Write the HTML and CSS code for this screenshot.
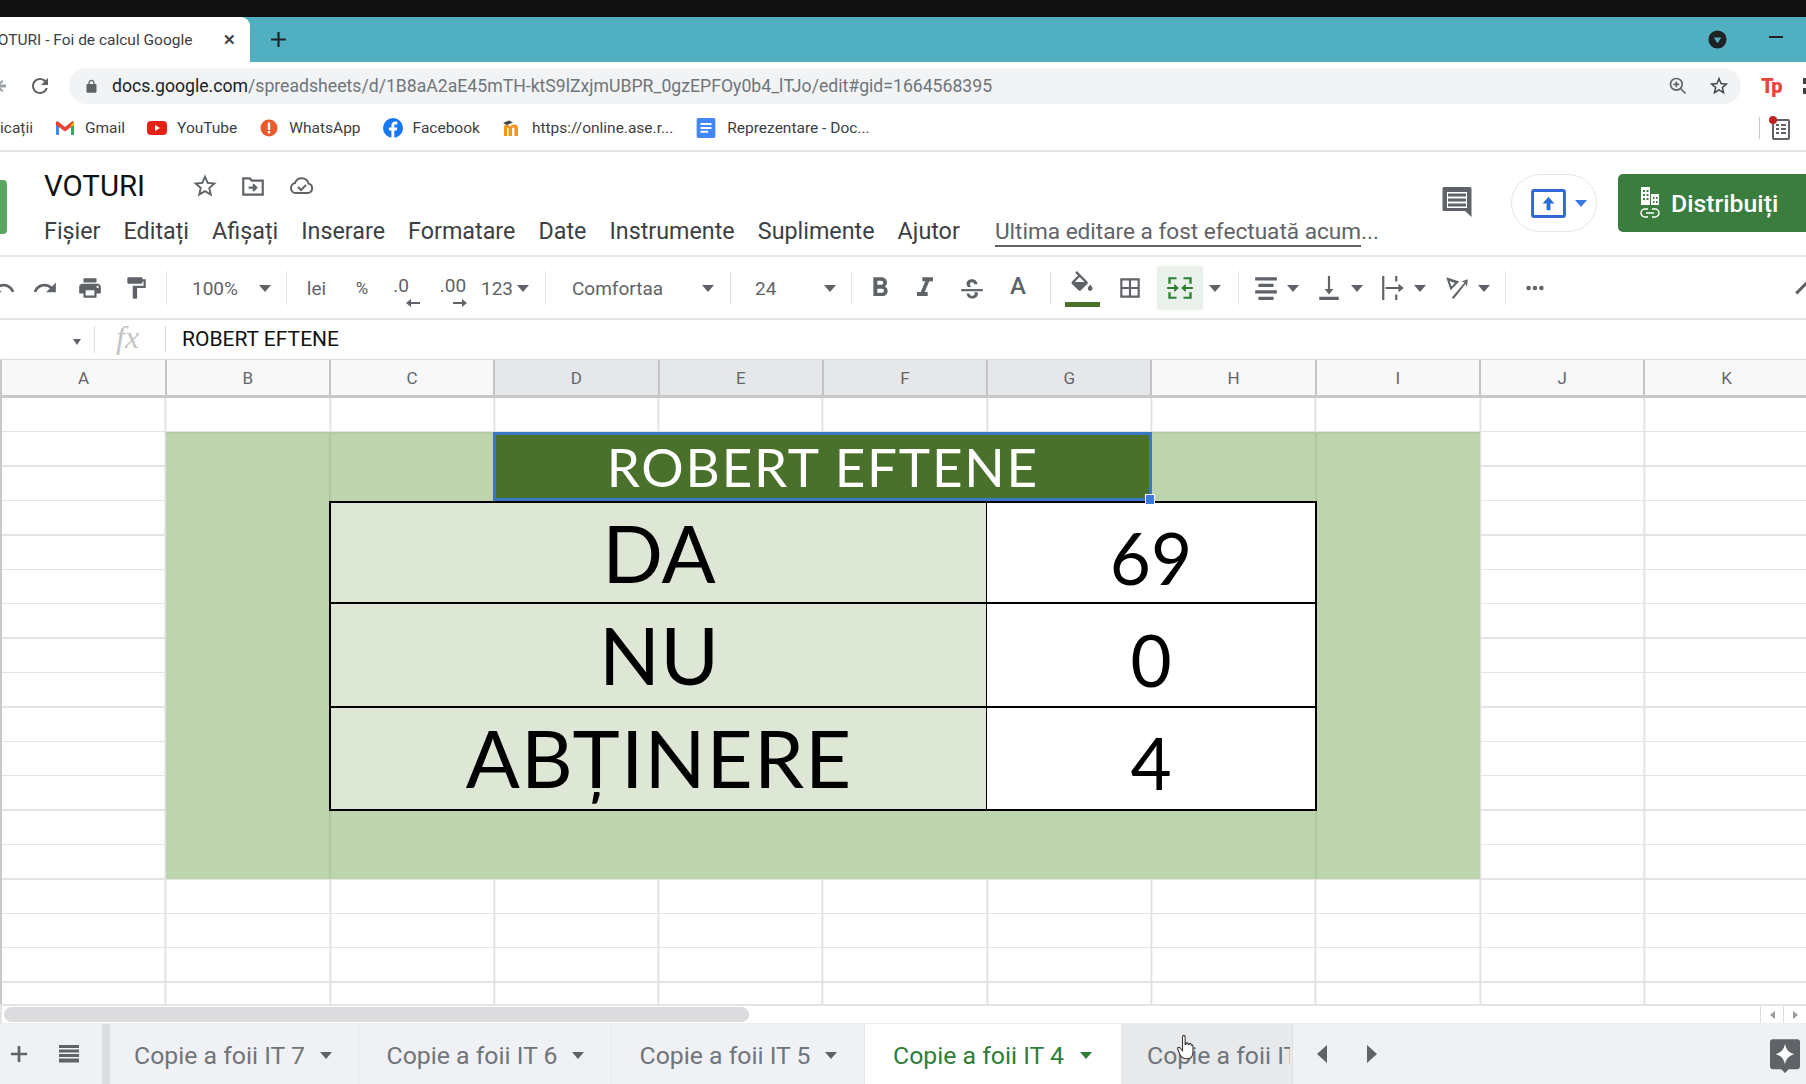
FILE: index.html
```html
<!DOCTYPE html>
<html lang="ro">
<head>
<meta charset="utf-8">
<title>VOTURI - Foi de calcul Google</title>
<link rel="stylesheet" href="styles.css">
</head>
<body>
<div class="blackbar"></div>
<div class="tabstrip">
  <div class="ctab"><span class="ctab-title">VOTURI - Foi de calcul Google</span><span class="ctab-x">✕</span></div>
  <svg class="newtab" viewBox="0 0 16 16"><path d="M7 1h2v6h6v2H9v6H7V9H1V7h6z"/></svg>
  <div class="grow"></div>
  <svg class="profile" viewBox="0 0 20 20"><circle cx="10" cy="10" r="9.500" fill="#202124"/><path d="M6 8h8l-4 6z" fill="#50b0c1"/></svg>
  <div class="minimize"></div>
</div>
<div class="addressrow">
  <svg class="backfrag" viewBox="0 0 8 20"><path d="M-4 10l6-6 1.500 1.500L0 8.500h6v3H0l3.500 3L2 16z" fill="#9aa0a6"/></svg>
  <svg class="reload" viewBox="0 0 24 24"><path d="M17.650 6.350C16.200 4.900 14.210 4 12 4c-4.420 0-7.990 3.580-7.990 8s3.570 8 7.990 8c3.730 0 6.840-2.550 7.730-6h-2.080c-.82 2.330-3.040 4-5.650 4-3.310 0-6-2.690-6-6s2.690-6 6-6c1.660 0 3.140.69 4.220 1.780L13 11h7V4l-2.350 2.350z"/></svg>
  <div class="omnibox">
    <svg class="lock" viewBox="0 0 24 24"><path d="M18 8h-1V6c0-2.760-2.240-5-5-5S7 3.240 7 6v2H6c-1.100 0-2 .9-2 2v10c0 1.100.9 2 2 2h12c1.100 0 2-.9 2-2V10c0-1.100-.9-2-2-2zM9 6c0-1.660 1.340-3 3-3s3 1.340 3 3v2H9V6z"/></svg>
    <span class="url"><span class="url-host">docs.google.com</span>/spreadsheets/d/1B8aA2aE45mTH-ktS9lZxjmUBPR_0gzEPFOy0b4_lTJo/edit#gid=1664568395</span>
    <div class="grow"></div>
    <svg class="omni-ic" viewBox="0 0 24 24"><circle cx="10" cy="10" r="7" fill="none" stroke="#5f6368" stroke-width="2"/><path d="M15 15l6 6M10 6.500v7M6.500 10h7" fill="none" stroke="#5f6368" stroke-width="2"/></svg>
    <svg class="omni-ic omni-star" viewBox="0 0 24 24"><path fill="#3c4043" d="M22 9.240l-7.190-.62L12 2 9.190 8.630 2 9.240l5.460 4.730L5.820 21 12 17.270 18.180 21l-1.630-7.030L22 9.240zM12 15.400l-3.760 2.270 1-4.280-3.320-2.880 4.380-.38L12 6.100l1.710 4.040 4.380.38-3.320 2.880 1 4.280L12 15.400z"/></svg>
  </div>
  <span class="tp"><span class="tp-t">T</span><span class="tp-p">p</span></span>
  <div class="vdots"><i></i><i></i></div>
</div>
<div class="bookmarks">
  <span class="bm-text bm-first">icații</span>
  <svg class="bm-ic" viewBox="0 0 20 20"><path d="M1 4h3v13H2a1 1 0 0 1-1-1z" fill="#4285f4"/><path d="M16 4h3v12a1 1 0 0 1-1 1h-2z" fill="#34a853"/><path d="M1 4l1.500-1L10 9l7.500-6L19 4v3l-9 6.500L1 7z" fill="#ea4335"/><path d="M16 6.500l3-2.500v3l-3 2.300z" fill="#fbbc04"/></svg>
  <span class="bm-text">Gmail</span>
  <svg class="bm-ic" viewBox="0 0 20 20"><rect y="3" width="20" height="14" rx="4" fill="#e62117"/><path d="M8 7l5 3-5 3z" fill="#fff"/></svg>
  <span class="bm-text">YouTube</span>
  <svg class="bm-ic" viewBox="0 0 20 20"><circle cx="10" cy="10" r="8.500" fill="#ea5a2b"/><rect x="8.800" y="4.500" width="2.400" height="7.500" fill="#fff"/><rect x="8.800" y="13" width="2.400" height="2.400" fill="#fff"/></svg>
  <span class="bm-text">WhatsApp</span>
  <svg class="bm-ic" viewBox="0 0 20 20"><circle cx="10" cy="10" r="10" fill="#1877f2"/><path d="M11.300 20v-7.500h2.500l.4-3h-2.900V7.800c0-.9.3-1.400 1.500-1.400h1.500V3.700c-.3 0-1.200-.1-2.200-.1-2.200 0-3.700 1.300-3.700 3.800v2.100H5.900v3h2.500V20z" fill="#fff"/></svg>
  <span class="bm-text">Facebook</span>
  <svg class="bm-ic" viewBox="0 0 20 20"><path d="M2 18V9c0-1.500 1-2.500 2.500-2.500S7 7.500 8 8.500C9 7.500 10 6.500 12 6.500c3 0 4 2 4 4V18h-3.500v-7c0-1-.5-1.500-1-1.500S10 10 10 11v7H6.500v-7c0-1-.5-1.500-1-1.500S5 10 5 11v7z" fill="#f39322"/><path d="M1 5l6-2.500 4 2-6 2.500z" fill="#444"/></svg>
  <span class="bm-text">https://online.ase.r...</span>
  <svg class="bm-ic bm-doc" viewBox="0 0 20 20"><path d="M3 1h14a1.500 1.500 0 0 1 1.500 1.500v15A1.500 1.500 0 0 1 17 19H3a1.500 1.500 0 0 1-1.500-1.500v-15A1.500 1.500 0 0 1 3 1z" fill="#4285f4"/><path d="M5 5.500h10v1.800H5zM5 9h10v1.800H5zM5 12.500h7v1.800H5z" fill="#fff"/></svg>
  <span class="bm-text">Reprezentare - Doc...</span>
  <div class="grow"></div>
  <div class="bm-sep"></div>
  <svg class="bm-list" viewBox="0 0 22 24"><rect x="4" y="4" width="16" height="19" rx="1" fill="#fff" stroke="#5f6368" stroke-width="2"/><path d="M7 9h3M12 9h5M7 13h3M12 13h5M7 17h3M12 17h5" stroke="#5f6368" stroke-width="2"/><circle cx="4" cy="4" r="4" fill="#c5221f"/></svg>
  <span class="bm-text bm-last">L</span>
</div>
<header class="docheader">
  <div class="logo"></div>
  <div class="docinfo">
    <div class="titlerow">
      <span class="doctitle">VOTURI</span>
      <svg class="ti-star" viewBox="0 0 24 24"><path d="M22 9.240l-7.190-.62L12 2 9.190 8.630 2 9.240l5.460 4.730L5.820 21 12 17.270 18.180 21l-1.630-7.030L22 9.240zM12 15.400l-3.760 2.270 1-4.280-3.320-2.880 4.380-.38L12 6.100l1.710 4.040 4.380.38-3.320 2.880 1 4.280L12 15.400z"/></svg>
      <svg class="ti-folder" viewBox="0 0 24 24"><path d="M3 5h6l2 2h10v13H3z" fill="none" stroke="#5f6368" stroke-width="2"/><path d="M8 13.500h6M12 10.500l3 3-3 3" fill="none" stroke="#5f6368" stroke-width="2"/></svg>
      <svg class="ti-cloud" viewBox="0 0 28 24"><path d="M8 19a5 5 0 0 1-1-9.900 7 7 0 0 1 13.500 0.500A4.800 4.800 0 0 1 20 19z" fill="none" stroke="#5f6368" stroke-width="2"/><path d="M10 13l3 3 5-5" fill="none" stroke="#5f6368" stroke-width="2"/></svg>
    </div>
    <nav class="menu">
      <span>Fișier</span><span>Editați</span><span>Afișați</span><span>Inserare</span><span>Formatare</span><span>Date</span><span>Instrumente</span><span>Suplimente</span><span>Ajutor</span>
      <span class="lastedit"><span class="lastedit-u">Ultima editare a fost efectuată acum</span>...</span>
    </nav>
  </div>
  <div class="grow"></div>
  <svg class="comment" viewBox="0 0 32 32"><path d="M3 1h26a1.500 1.500 0 0 1 1.500 1.500V31L24 25H3a1.500 1.500 0 0 1-1.500-1.500v-21A1.500 1.500 0 0 1 3 1z" fill="#5f6368"/><path d="M6 6h20v16H6z" fill="#fff"/><path d="M7 7.500h18v3H7zM7 12.500h18v3H7zM7 17.500h18v3H7z" fill="#5f6368"/></svg>
  <div class="present">
    <svg class="present-ic" viewBox="0 0 36 30"><rect x="1.500" y="1.500" width="33" height="27" rx="1.500" fill="#fff" stroke="#3367d6" stroke-width="3"/><path d="M18 8l6 7h-4v7h-4v-7h-4z" fill="#2a6fd6"/></svg>
    <svg class="present-arrow" viewBox="0 0 12 7"><path d="M0 0h12L6 7z" fill="#3b78e7"/></svg>
  </div>
  <div class="share">
    <svg class="share-ic" viewBox="0 0 22 34"><path d="M2 1h9v18H2zM12 8h8v11h-8z" fill="#fff"/><path d="M4 4h2v2H4zM7.500 4h2v2h-2zM4 8h2v2H4zM7.500 8h2v2h-2zM4 12h2v2H4zM7.500 12h2v2h-2zM14 11h1.500v2H14zM17 11h1.500v2H17zM14 15h1.500v2H14zM17 15h1.500v2H17z" fill="#3b7d3e"/><path d="M9 23H6a3.500 3.500 0 0 0 0 8h3M13 23h3a3.500 3.500 0 0 1 0 8h-3M7 27h8" fill="none" stroke="#fff" stroke-width="1.500"/></svg>
    <span>Distribuiți</span>
  </div>
</header>
<div class="toolbar">
  <span class="t w41"><svg class="ic" viewBox="0 0 24 24"><path d="M12.500 8c-2.650 0-5.050.99-6.900 2.600L2 7v9h9l-3.620-3.620c1.390-1.160 3.160-1.880 5.120-1.880 3.540 0 6.550 2.310 7.610 5.500l2.370-.78C21.080 11.030 17.150 8 12.500 8z"/></svg></span>
  <span class="t w44"><svg class="ic" viewBox="0 0 24 24"><path d="M18.400 10.600C16.550 8.990 14.150 8 11.500 8c-4.650 0-8.580 3.030-9.960 7.220L3.900 16c1.050-3.190 4.050-5.500 7.600-5.500 1.950 0 3.730.72 5.120 1.880L13 16h9V7l-3.600 3.600z"/></svg></span>
  <span class="t w46"><svg class="ic" viewBox="0 0 24 24"><path d="M19 8H5c-1.660 0-3 1.340-3 3v6h4v4h12v-4h4v-6c0-1.660-1.340-3-3-3zm-3 11H8v-5h8v5zm3-7c-.55 0-1-.45-1-1s.45-1 1-1 1 .45 1 1-.45 1-1 1zm-1-9H6v4h12V3z"/></svg></span>
  <span class="t w40 paint"><svg class="ic" viewBox="0 0 24 24"><path d="M18 4V3c0-.55-.45-1-1-1H5c-.55 0-1 .45-1 1v4c0 .55.45 1 1 1h12c.55 0 1-.45 1-1V6h1v4H9v11c0 .55.45 1 1 1h2c.55 0 1-.45 1-1v-9h8V4h-3z"/></svg></span>
  <span class="sep ml13"></span>
  <span class="tl ml25 w58">100%</span>
  <span class="t w30"><i class="caret"></i></span>
  <span class="sep ml6"></span>
  <span class="t w59 tx">lei</span>
  <span class="t w32 tx tx-s">%</span>
  <span class="t w58 dec dec-a">.0<svg class="dec-arrow" viewBox="0 0 14 10"><path d="M14 4H5V1L0 5l5 4V6h9z"/></svg></span>
  <span class="t w34 dec dec-b">.00<svg class="dec-arrow" viewBox="0 0 14 10"><path d="M0 4h9V1l5 4-5 4V6H0z"/></svg></span>
  <span class="tl ml11 w32">123</span>
  <span class="t w20"><i class="caret"></i></span>
  <span class="sep ml12"></span>
  <span class="tl ml26 w94">Comfortaa</span>
  <span class="t ml27 w30"><i class="caret"></i></span>
  <span class="sep ml7"></span>
  <span class="tl ml24 w23">24</span>
  <span class="t ml37 w30"><i class="caret"></i></span>
  <span class="sep ml6"></span>
  <span class="t w56"><svg class="ic ic-big" viewBox="0 0 24 24"><path d="M15.600 10.790c.97-.67 1.650-1.770 1.650-2.790 0-2.260-1.750-4-4-4H7v14h7.040c2.090 0 3.710-1.700 3.710-3.790 0-1.520-.86-2.820-2.150-3.420zM10 6.500h3c.83 0 1.500.67 1.500 1.500s-.67 1.500-1.500 1.500h-3v-3zm3.500 9H10v-3h3.500c.83 0 1.500.67 1.500 1.500s-.67 1.500-1.500 1.500z"/></svg></span>
  <span class="t w34"><svg class="ic ic-big" viewBox="0 0 24 24"><path d="M10 4v3h2.210l-3.420 8H6v3h8v-3h-2.210l3.420-8H18V4z"/></svg></span>
  <span class="t w60"><svg class="ic" viewBox="0 0 24 24"><path d="M2 13h20v2H2z"/><path d="M17 8.500C17 6 15 4 12 4S7 5.800 7 8c0 1.300.5 2.200 1.200 3h3.300C10.500 10.500 10 9.500 10 8.500 10 7.400 10.900 6.700 12 6.700s2 .8 2.200 1.800zM14.200 16c.2.400.3.800.3 1.300 0 1.100-1 1.900-2.300 1.900s-2.400-.8-2.600-2.200H7c.2 2.800 2.400 4.700 5.200 4.700 3 0 5.200-1.900 5.200-4.400 0-.5-.1-.9-.2-1.300z"/></svg></span>
  <span class="t w32 ta">A</span>
  <span class="sep ml16"></span>
  <span class="t w62 fill"><svg class="ic" viewBox="0 0 24 24"><path d="M16.560 8.940L7.620 0 6.210 1.410l2.380 2.380-5.150 5.150c-.59.59-.59 1.540 0 2.120l5.500 5.500c.29.29.68.44 1.060.44s.77-.15 1.060-.44l5.500-5.500c.59-.58.59-1.530 0-2.120zM5.210 10L10 5.210 14.790 10H5.210zM19 11.500s-2 2.170-2 3.500c0 1.100.9 2 2 2s2-.9 2-2c0-1.330-2-3.500-2-3.500z"/><path d="M4.500 9.500h11L10 15z"/></svg><i class="fill-bar"></i></span>
  <span class="t w34"><svg class="ic" viewBox="0 0 24 24"><path d="M3 3v18h18V3H3zm8 16H5v-6h6v6zm0-8H5V5h6v6zm8 8h-6v-6h6v6zm0-8h-6V5h6v6z"/></svg></span>
  <span class="t ml10 w46 merge"><svg class="ic ic-green" viewBox="0 0 24 24" preserveAspectRatio="none"><path d="M2 2h7v2H4v4H2zM15 2h7v6h-2V4h-5zM2 16h2v4h5v2H2zM20 16h2v6h-7v-2h5z"/><path d="M1 11h6V8l4 4-4 4v-3H1zM23 11h-6V8l-4 4 4 4v-3h6z"/></svg></span>
  <span class="t w24"><i class="caret"></i></span>
  <span class="sep ml11"></span>
  <span class="t ml15 w24"><svg class="ic" viewBox="0 0 24 24"><path d="M2 2h20v3H2zM5 8h14v3H5zM2 14h20v3H2zM5 20h14v3H5z"/></svg></span>
  <span class="t w30"><i class="caret"></i></span>
  <span class="t w42"><svg class="ic" viewBox="0 0 24 24"><path d="M11 1h2v12h3l-4 5-4-5h3zM3 20h18v3H3z"/></svg></span>
  <span class="t w14"><i class="caret"></i></span>
  <span class="t ml16 w26"><svg class="ic" viewBox="0 0 24 24"><path d="M2 1h2v22H2zM14 1h2v5h-2zM14 18h2v5h-2zM5 11h12V8l5 4-5 4v-3H5z"/></svg></span>
  <span class="t w28"><i class="caret"></i></span>
  <span class="t w44"><svg class="ic" viewBox="0 0 24 24"><path d="M3 2l12 4-8 8zM6 5.500l2 5 3-3.200z" fill-rule="evenodd"/><path d="M8 21L20 7l-3-1 6-2-1 7-1-3L10 22z"/></svg></span>
  <span class="t w12"><i class="caret"></i></span>
  <span class="sep ml15"></span>
  <span class="t w58"><svg class="ic ic-more" viewBox="0 0 24 8"><circle cx="5" cy="4" r="2.500"/><circle cx="12" cy="4" r="2.500"/><circle cx="19" cy="4" r="2.500"/></svg></span>
  <span class="t ml227 w30"><svg class="ic" viewBox="0 0 24 24"><path d="M12 6l-10 10 2 2 8-8 8 8 2-2z"/></svg></span>
</div>
<div class="formulabar">
  <i class="caret caret-s"></i>
  <span class="fsep fsep-a"></span>
  <span class="fx">fx</span>
  <span class="fsep fsep-b"></span>
  <span class="ftext">ROBERT EFTENE</span>
</div>
<div class="colheaders">
  <span>A</span><span>B</span><span>C</span><span class="sel">D</span><span class="sel">E</span><span class="sel">F</span><span class="sel">G</span><span>H</span><span>I</span><span>J</span><span>K</span>
</div>
<main class="sheet">
  <div class="greenblock"></div>
  <div class="cell-title">ROBERT EFTENE<i class="handle"></i></div>
  <div class="label r1">DA</div><div class="value r1">69</div>
  <div class="label r2">NU</div><div class="value r2">0</div>
  <div class="label r3">ABȚINERE</div><div class="value r3">4</div>
</main>
<div class="hscroll">
  <div class="thumb"></div>
  <div class="grow"></div>
  <div class="hs-btn"><i class="tri-l"></i></div>
  <div class="hs-btn"><i class="tri-r"></i></div>
</div>
<footer class="tabs">
  <svg class="add" viewBox="0 0 20 20"><path d="M8.500 1h3v7.500H19v3h-7.500V19h-3v-7.500H1v-3h7.500z"/></svg>
  <svg class="allsheets" viewBox="0 0 20 20"><path d="M0 1h20v3H0zM0 5.500h20v3H0zM0 10h20v3H0zM0 14.500h20v4H0z"/></svg>
  <div class="shadowbar"></div>
  <div class="stab stab-first">Copie a foii IT 7<i class="caret"></i></div>
  <div class="stab">Copie a foii IT 6<i class="caret"></i></div>
  <div class="stab">Copie a foii IT 5<i class="caret"></i></div>
  <div class="stab active">Copie a foii IT 4<i class="caret"></i></div>
  <div class="stab hover"><span class="clipped">Copie a foii IT 3</span></div>
  <i class="tri-l big nav-l"></i>
  <i class="tri-r big nav-r"></i>
  <div class="grow"></div>
  <svg class="explore" viewBox="0 0 32 36"><path d="M3 0h26a3 3 0 0 1 3 3v26a3 3 0 0 1-3 3h-9l-4 4-4-4H3a3 3 0 0 1-3-3V3a3 3 0 0 1 3-3z" fill="#5f6368"/><path d="M16 5c1 6 4 9.500 10 11-6 1.500-9 5-10 11-1-6-4-9.500-10-11 6-1.500 9-5 10-11z" fill="#fff"/></svg>
  <svg class="hand" viewBox="0 0 20 30"><path d="M6 2c0-2 3-2 3 0v9l1-.3V10c0-1.500 2.500-1.500 2.500 0v1l1-.2c0-1.300 2.300-1.300 2.300 0v1.200c0-1 2.200-1 2.200.5v7c0 5-3 8-7.500 8-4 0-6-2-7.500-5L.5 16.500c-.8-1.800 1.500-3 2.700-1.500L6 18z" fill="#fff" stroke="#333" stroke-width="1.200"/></svg>
</footer>
</body>
</html>
```
FILE: styles.css
```css
* { box-sizing: border-box; }
html, body { margin: 0; padding: 0; }
body {
  width: 1806px; height: 1084px; overflow: hidden; background: #fff;
  display: flex; flex-direction: column;
  font-family: Roboto, "Liberation Sans", sans-serif; color: #202124;
}
.grow { flex: 1 1 auto; }
svg { display: block; flex: none; }

.blackbar { height: 17px; background: #111; flex: none; }

.tabstrip { height: 45px; background: #50b0c1; display: flex; align-items: center; flex: none; }
.ctab {
  width: 250px; height: 45px; background: #fff; border-top-right-radius: 9px;
  display: flex; align-items: center; overflow: hidden; position: relative;
}
.ctab-title { white-space: nowrap; font-size: 15.5px; margin-left: -12px; color: #3c4043; }
.ctab-x { position: absolute; left: 223px; font-size: 15px; font-weight: 700; color: #3c4043; }
.newtab { width: 17px; height: 17px; margin-left: 20px; fill: #202124; }
.profile { width: 19px; height: 19px; margin-right: 42px; }
.minimize { width: 14px; height: 2px; background: #202124; margin-right: 23px; margin-bottom: 6px; }

.addressrow { height: 48px; width: 1830px; display: flex; align-items: center; flex: none; position: relative; }
.backfrag { width: 8px; height: 20px; }
.reload { width: 24px; height: 24px; margin-left: 20px; fill: #5f6368; }
.omnibox {
  width: 1672px; height: 36px; margin-left: 17px; background: #f1f3f4; border-radius: 18px;
  display: flex; align-items: center;
}
.lock { width: 15px; height: 17px; margin-left: 15px; fill: #5f6368; }
.url { margin-left: 13px; font-size: 17.65px; color: #70757a; white-space: nowrap; }
.url-host { color: #202124; }
.omni-ic { width: 20px; height: 20px; }
.omni-star { margin-left: 20px; margin-right: 11px; width: 22px; height: 22px; }
.tp { margin-left: 20px; font-weight: 900; font-size: 20px; color: #e8453c; letter-spacing: -1.5px; white-space: nowrap; }
.vdots { margin-left: 22px; display: flex; flex-direction: column; gap: 4px; }
.vdots i { display: block; width: 4px; height: 6px; background: #3c4043; }

.bookmarks {
  height: 42px; width: 1820px; display: flex; align-items: center; flex: none;
  border-bottom: 2px solid #e4e4e6; padding-bottom: 4px;
}
.bm-text { font-size: 15.5px; color: #3c4043; margin-left: 10px; margin-right: 22px; white-space: nowrap; }
.bm-first { margin-left: 0; }
.bm-ic { width: 20px; height: 20px; }
.bm-doc { width: 22px; height: 24px; }
.bm-sep { width: 1px; height: 22px; background: #c9c9c9; }
.bm-list { width: 22px; height: 24px; margin-left: 9px; }
.bm-last { margin-right: 0; margin-left: 15px; width: 14px; }

.docheader { height: 105px; display: flex; flex: none; border-bottom: 2px solid #e6e6e8; position: relative; }
.logo { width: 7px; height: 54px; margin-top: 28px; background: #5aa662; border-radius: 0 4px 4px 0; flex: none; }
.docinfo { margin-left: 37px; display: flex; flex-direction: column; }
.titlerow { display: flex; align-items: center; height: 34px; margin-top: 17px; }
.doctitle { font-size: 29.4px; width: 147px; color: #111; }
.titlerow svg { fill: #5f6368; }
.ti-star { width: 28px; height: 28px; margin-left: 0; }
.ti-folder { width: 26px; height: 26px; margin-left: 21px; }
.ti-cloud { width: 28px; height: 26px; margin-left: 22px; }
.menu { display: flex; gap: 23.1px; margin-top: 14px; font-size: 23.3px; color: #3c4043; white-space: nowrap; align-items: center; height: 28px; }
.lastedit { margin-left: 12px; color: #5f6368; font-size: 22.6px; }
.lastedit-u { border-bottom: 2px solid #5f6368; }
.comment { width: 32px; height: 32px; margin-top: 34px; }
.present {
  width: 86px; height: 58px; margin-top: 22px; margin-left: 38px;
  border: 1px solid #e6e6e8; border-radius: 29px; display: flex; align-items: center;
}
.present-ic { width: 35px; height: 29px; margin-left: 19px; }
.present-arrow { width: 12px; height: 7px; margin-left: 9px; }
.share {
  width: 188px; height: 58px; margin-top: 22px; margin-left: 21px;
  background: #3b7d3e; border-radius: 5px 0 0 5px; color: #fff;
  display: flex; align-items: center; font-size: 24.8px; font-weight: 500;
}
.share-ic { width: 22px; height: 34px; margin-left: 21px; }
.share span { margin-left: 10px; }

.toolbar {
  height: 63px; width: 1840px; margin-left: -18px; flex: none; display: flex; align-items: center;
  border-bottom: 2px solid #e6e6e8; color: #5f6368; font-size: 19px; padding-top: 1px;
}
.t { display: flex; align-items: center; justify-content: center; height: 44px; flex: none; position: relative; }
.tl { display: block; flex: none; white-space: nowrap; }
.ic { width: 26px; height: 26px; fill: #5f6368; }
.ic-big { width: 32px; height: 32px; }
.paint { padding-left: 6px; }
.ic-green { fill: #2e7d32; width: 28px; height: 26px; }
.ic-more { width: 22px; height: 8px; }
.sep { width: 1px; height: 34px; background: #e4e4e6; flex: none; }
.caret { display: block; width: 0; height: 0; border-left: 6px solid transparent; border-right: 6px solid transparent; border-top: 7px solid #5f6368; flex: none; }
.tx-s { font-size: 17px; }
.dec { font-size: 19px; padding-bottom: 5px; }
.dec-a { padding-right: 12px; }
.dec-arrow { position: absolute; width: 14px; height: 10px; bottom: 2px; left: 50%; fill: #5f6368; }
.dec-a .dec-arrow { margin-left: -1px; }
.dec-b .dec-arrow { margin-left: 0; }
.ta { font-size: 24px; font-weight: 500; padding-bottom: 5px; }
.fill .ic { margin-top: -7px; width: 28px; height: 28px; }
.fill-bar { position: absolute; left: 14px; bottom: 3px; width: 35px; height: 5px; background: #4a712c; }
.merge { background: #e9f1ea; border-radius: 2px; }
.w12{width:12px}.w14{width:14px}.w20{width:20px}.w23{width:23px}.w24{width:24px}.w26{width:26px}.w28{width:28px}.w30{width:30px}
.w32{width:32px}.w34{width:34px}.w40{width:40px}.w41{width:41px}.w42{width:42px}.w44{width:44px}.w46{width:46px}.w56{width:56px}
.w58{width:58px}.w59{width:59px}.w60{width:60px}.w62{width:62px}.w94{width:94px}
.ml6{margin-left:6px}.ml7{margin-left:7px}.ml10{margin-left:10px}.ml11{margin-left:11px}.ml12{margin-left:12px}.ml13{margin-left:13px}
.ml15{margin-left:15px}.ml16{margin-left:16px}.ml24{margin-left:24px}.ml25{margin-left:25px}.ml26{margin-left:26px}.ml27{margin-left:27px}
.ml37{margin-left:37px}.ml227{margin-left:227px}

.formulabar { height: 39px; display: flex; align-items: center; flex: none; position: relative; }
.caret-s { margin-left: 73px; border-left-width: 4px; border-right-width: 4px; border-top-width: 6px; margin-top: 4px; }
.fsep { width: 1px; height: 27px; background: #dcdcdc; }
.fsep-a { margin-left: 13px; }
.fsep-b { margin-left: 70px; }
.fx { position: absolute; left: 116px; top: -1px; font-family: "Liberation Serif", serif; font-style: italic; font-size: 32px; color: #c4c4c4; }
.ftext { margin-left: 16px; font-size: 21px; color: #111; white-space: nowrap; padding-bottom: 1px; }

.colheaders {
  height: 39px; width: 1830px; display: grid; grid-template-columns: repeat(11, 164.3px); flex: none;
  border-top: 1px solid #dcdcdc; border-bottom: 3px solid #c8c8c8; border-left: 2px solid #c8c8c8;
  padding-left: 0.4px; background: #f8f8f9; font-size: 17px; color: #666;
}
.colheaders span { display: flex; align-items: center; justify-content: center; border-right: 2px solid #c4c4c8; }
.colheaders .sel { background: #e6e7ea; }

.sheet {
  height: 606px; width: 1830px; flex: none; overflow: hidden;
  display: grid; grid-template-columns: repeat(11, 164.3px); grid-template-rows: repeat(18, 34.4px);
  border-left: 2px solid #c8c8c8; padding-left: 0.4px; background-color: #fff;
  background-image:
    repeating-linear-gradient(to right, transparent 0, transparent 162.3px, #e2e2e2 162.3px, #e2e2e2 164.3px),
    repeating-linear-gradient(to bottom, transparent 0, transparent 32.9px, #e4e4e4 32.9px, #e4e4e4 34.4px);
  background-position: 0.4px 0, 0 0;
}
.greenblock {
  grid-column: 2 / 10; grid-row: 2 / 15; background-color: #bdd4ac; margin: 0 1px 0 -1px;
  background-image: linear-gradient(#afc99e, #afc99e), linear-gradient(#afc99e, #afc99e);
  background-repeat: no-repeat; background-size: 2px 100%, 2px 100%; background-position: 163px 0, 1149px 0;
  border-top: 2px solid #b2cba2;
}
.cell-title {
  grid-column: 4 / 8; grid-row: 2 / 4; background: #4a712c; color: #fff; position: relative; margin-left: -2px;
  border: 3px solid #3b78c4; display: flex; align-items: center; justify-content: center;
  font-family: Lato, sans-serif; font-size: 53px; letter-spacing: 1.8px; z-index: 1;
}
.handle { position: absolute; right: -6px; bottom: -7px; width: 10px; height: 11px; background: #3b78e0; border: 1px solid #fff; }
.label, .value {
  display: flex; align-items: center; justify-content: center; border: 1px solid #000; border-bottom-width: 2px;
}
.label { grid-column: 3 / 7; margin-left: -2px; background: #dee7d6; font-family: Lato, sans-serif; font-size: 80px; color: #000; border-left-width: 2px; padding-bottom: 2px; }
.label.r3 { letter-spacing: 1.1px; }
.value { grid-column: 7 / 9; margin-left: -2px; background: #fff; font-family: Lato, sans-serif; font-size: 71px; color: #000; padding-top: 9px; border-right-width: 2px; }
.r1 { grid-row: 4 / 7; border-top-width: 2px; }
.r2 { grid-row: 7 / 10; border-top-width: 0; }
.r3 { grid-row: 10 / 13; border-top-width: 0; }

.hscroll { height: 20px; flex: none; display: flex; align-items: center; border-top: 2px solid #e4e4e4; border-left: 2px solid #e4e4e4; border-bottom: 1px solid #eee; }
.thumb { width: 745px; height: 15px; margin-left: 2px; background: #dcdcdf; border-radius: 8px; }
.hs-btn { width: 23px; height: 17px; border-left: 1px solid #dcdcdc; display: flex; align-items: center; justify-content: center; flex: none; }
.tri-l, .tri-r { display: block; width: 0; height: 0; border-top: 4px solid transparent; border-bottom: 4px solid transparent; flex: none; }
.tri-l { border-right: 5px solid #999; }
.tri-r { border-left: 5px solid #999; }

.tabs { height: 60px; flex: none; background: #f0f1f4; display: flex; align-items: stretch; position: relative; }
.add { width: 18px; height: 18px; margin-left: 10px; align-self: center; fill: #5f6368; }
.allsheets { width: 20px; height: 20px; margin-left: 31px; align-self: center; fill: #5f6368; }
.shadowbar { width: 8px; margin-left: 23px; background: #dcdde0; flex: none; }
.stab {
  width: 253px; padding: 2px 0 0 27.5px; display: flex; align-items: center; flex: none;
  font-size: 24.8px; color: #70757a; white-space: nowrap; border-right: 1px solid #e6e7ea;
}
.stab-first { width: 249px; padding-left: 24px; }
.stab .caret { margin-left: 15px; }
.stab.active { width: 256px; padding-left: 28px; background: #fff; color: #2e7d3a; border-right: 0; }
.stab.active .caret { border-top-color: #2e7d3a; margin-left: 16px; }
.stab.hover { width: 172px; padding-left: 26px; background: #e8e9eb; border-right: 1px solid #dedfe2; overflow: hidden; }
.clipped { display: block; width: 143px; overflow: hidden; }
.big { border-top-width: 9px; border-bottom-width: 9px; align-self: center; }
.big.tri-l { border-right: 10px solid #5f6368; margin-left: 24px; }
.big.tri-r { border-left: 10px solid #5f6368; margin-left: 40px; }
.explore { width: 30px; height: 34px; align-self: center; margin-right: 6px; margin-top: 4px; }
.hand { position: absolute; left: 1177px; top: 11px; width: 18px; height: 26px; }
```
